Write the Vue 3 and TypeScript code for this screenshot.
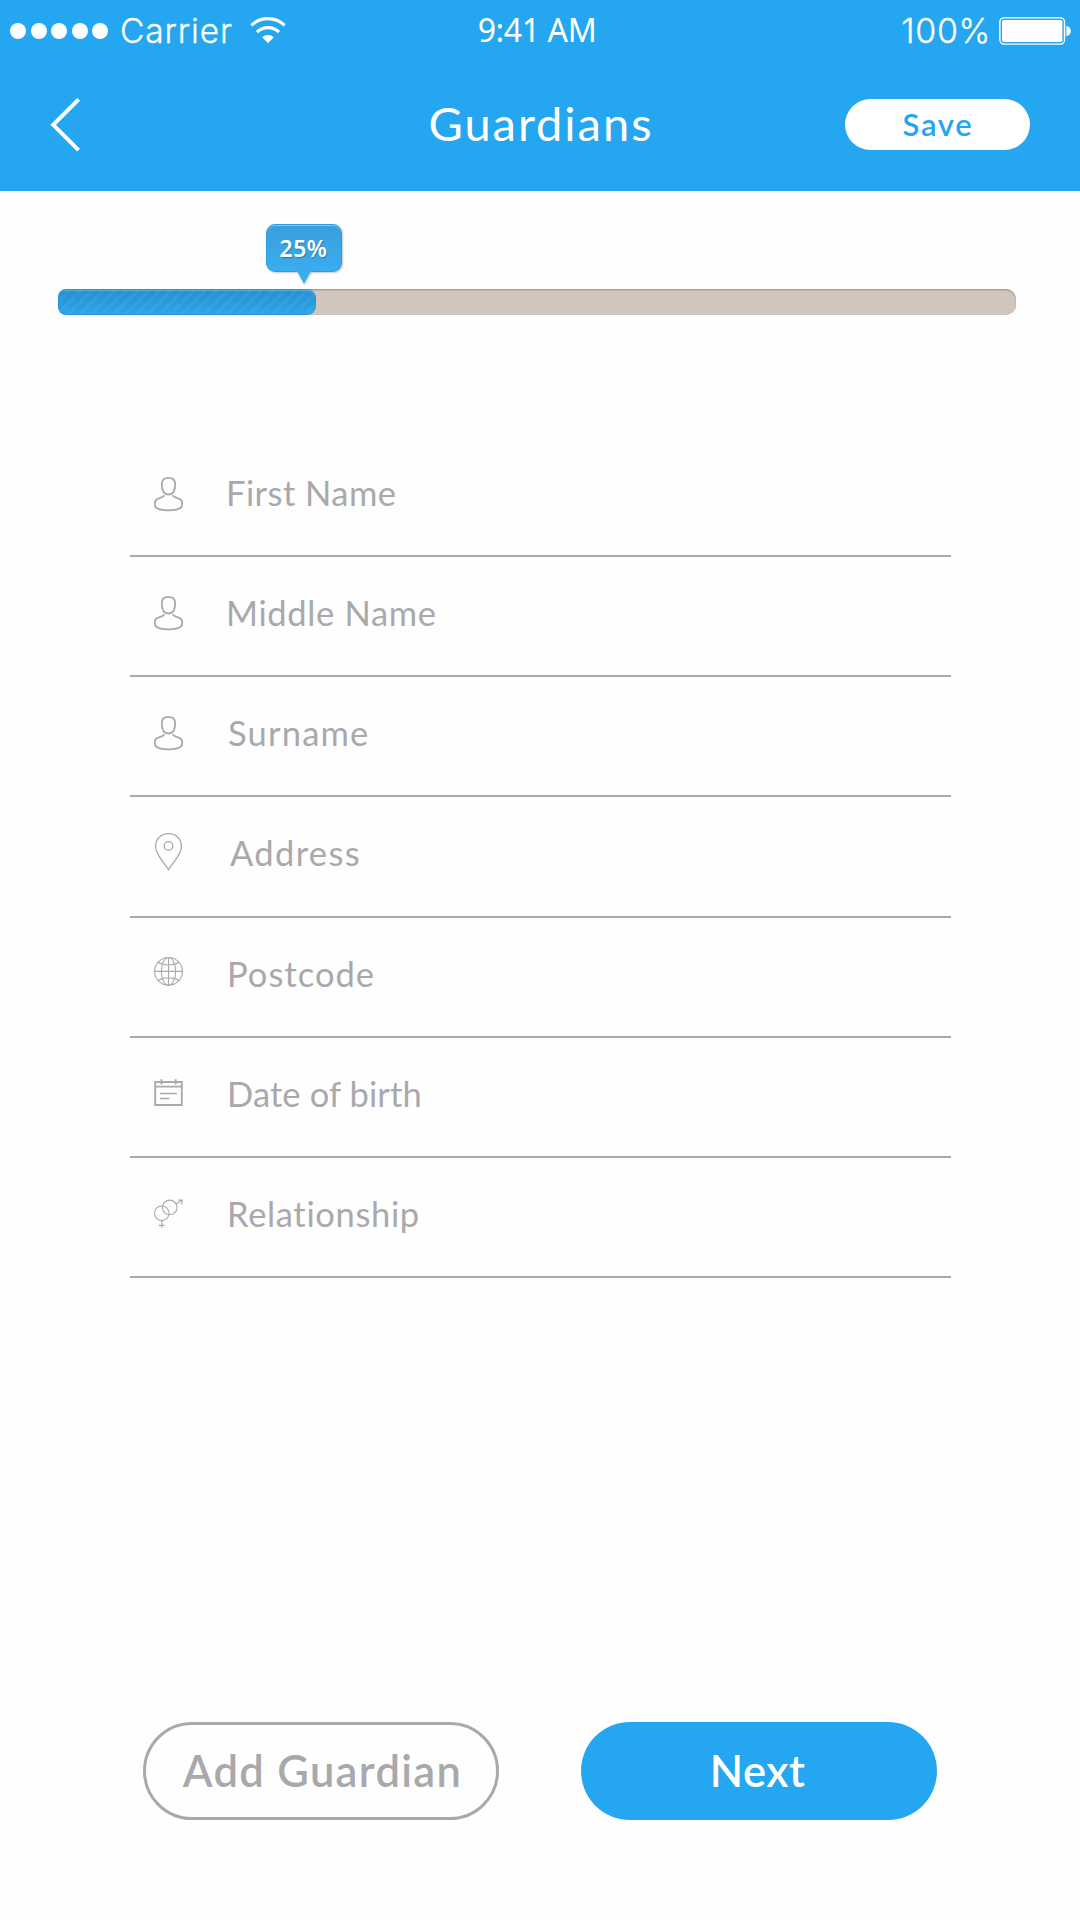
<script setup lang="ts">
import { reactive } from 'vue'

type IconName = 'person' | 'pin' | 'globe' | 'calendar' | 'gender'

interface Field {
  label: string
  icon: IconName
  indent: number
  tracking: number
}

const fields: Field[] = [
  { label: 'First Name', icon: 'person', indent: 41, tracking: 0.45 },
  { label: 'Middle Name', icon: 'person', indent: 41, tracking: 0.65 },
  { label: 'Surname', icon: 'person', indent: 43, tracking: 1.18 },
  { label: 'Address', icon: 'pin', indent: 45, tracking: 1.35 },
  { label: 'Postcode', icon: 'globe', indent: 42, tracking: 1.03 },
  { label: 'Date of birth', icon: 'calendar', indent: 42, tracking: 0.12 },
  { label: 'Relationship', icon: 'gender', indent: 42, tracking: 0.65 },
]

const progress = reactive({ label: '25%', fill: 26.93 })
</script>

<template>
  <div class="screen">
    <header class="header">
      <div class="status">
        <div class="status-left">
          <span class="dots"><i v-for="n in 5" :key="n" class="dot"></i></span>
          <span class="carrier">Carrier</span>
          <svg class="wifi" width="36" height="28" viewBox="0 0 36 28" fill="none" stroke="#fff" stroke-width="3.2">
            <path d="M1.4 9.4C10.6 0.3 25.4 0.3 34.6 9.4" />
            <path d="M7 16.2C13.2 10.2 22.8 10.2 29 16.2" />
            <path d="M12.2 21.2C15.6 18.2 20.4 18.2 23.8 21.2L18 27.2Z" fill="#fff" stroke="none" />
          </svg>
        </div>
        <div class="time">9:41 AM</div>
        <div class="status-right">
          <span class="percent">100%</span>
          <svg class="battery" width="73" height="28" viewBox="0 0 73 28">
            <rect x="0.9" y="0.9" width="64.6" height="26.2" rx="4" fill="none" stroke="#fff" stroke-width="1.4" />
            <rect x="3" y="3" width="60.4" height="22" rx="1.8" fill="#fff" />
            <path d="M67.3 9C73.4 9.6 73.4 18.4 67.3 19Z" fill="#fff" />
          </svg>
        </div>
      </div>
      <nav class="nav">
        <div class="nav-left">
          <svg class="back" width="31" height="54" viewBox="0 0 31 54" fill="none" stroke="#fff" stroke-width="4">
            <path d="M28.6 1.4L3.2 26.8L28.6 52.2" />
          </svg>
        </div>
        <h1 class="title">Guardians</h1>
        <div class="nav-right"><button class="save">Save</button></div>
      </nav>
    </header>

    <section class="progress">
      <div class="bubble"><span>{{ progress.label }}</span></div>
      <div class="track">
        <div class="fill" :style="{ width: progress.fill + '%' }"></div>
      </div>
    </section>

    <form class="form">
      <label v-for="f in fields" :key="f.label" class="row">
        <svg class="icon" width="32" height="44" viewBox="0 0 32 44" fill="none" stroke="#a9a9ab">
          <g v-if="f.icon === 'person'" stroke-width="1.8" stroke-linecap="round">
            <path d="M15.5 6.8C19.8 6.8 22.2 9 22.2 13.3C22.2 19.6 20.2 23.5 15.5 23.5C10.8 23.5 8.8 19.6 8.8 13.3C8.8 9 11.2 6.8 15.5 6.8Z" />
            <path d="M11 24.8C8.6 27.2 5.2 27 3 29C1.7 30.3 1.7 33.4 2.2 35.6C4.2 38.2 10 39.3 15.5 39.3C21 39.3 26.8 38.2 28.8 35.6C29.3 33.4 29.3 30.3 28 29C25.8 27 22.4 27.2 20 24.8" />
          </g>
          <g v-else-if="f.icon === 'pin'" stroke-width="1.3">
            <path d="M15.5 38.8C11.5 31.5 2.6 24 2.6 15.4C2.6 8 8 2.7 15.5 2.7C23 2.7 28.4 8 28.4 15.4C28.4 24 19.5 31.5 15.5 38.8Z" />
            <circle cx="15.5" cy="15" r="4.3" />
          </g>
          <g v-else-if="f.icon === 'globe'" stroke-width="1.1">
            <circle cx="15.5" cy="19.4" r="13.9" />
            <ellipse cx="15.5" cy="19.4" rx="7.1" ry="13.9" />
            <path d="M15.5 5.5V33.3M1.6 19.4H29.4M4.9 10.3C10.5 13.9 20.5 13.9 26.1 10.3M4.9 28.5C10.5 24.9 20.5 24.9 26.1 28.5" />
          </g>
          <g v-else-if="f.icon === 'calendar'" stroke-width="1.9">
            <path d="M2.2 10H28.8V33H2.2ZM2.2 14.6H28.8" />
            <path d="M8.5 7.2V12.6M22.7 7.2V12.6" />
            <path d="M7.6 21.5H23.2M7.6 26.5H15.6" stroke-width="1.7" stroke-linecap="round" />
          </g>
          <g v-else stroke-width="1.1">
            <circle cx="8.8" cy="21.3" r="7.3" />
            <circle cx="16.7" cy="15.4" r="7.3" />
            <path d="M23 12L28.6 8.6M25.3 8.1L29.2 8.1L28.6 12.4M8.8 28.6V36M5.9 33.4H11.7" />
          </g>
        </svg>
        <span class="label" :style="{ marginLeft: f.indent + 'px', letterSpacing: f.tracking + 'px' }">{{ f.label }}</span>
      </label>
    </form>

    <footer class="actions">
      <button class="btn btn-outline">Add Guardian</button>
      <button class="btn btn-primary">Next</button>
    </footer>
  </div>
</template>

<style>
body {
  background: #fefefe;
}
</style>

<style scoped>
* {
  box-sizing: border-box;
}
.screen {
  display: flex;
  flex-direction: column;
  width: 1080px;
  height: 1920px;
  background: #fefefe;
  font-family: Lato, sans-serif;
}
button {
  border: none;
  margin: 0;
  font-family: inherit;
}
.header {
  height: 191px;
  background: #24a6f1;
  color: #fff;
}
.status {
  display: grid;
  grid-template-columns: 1fr auto 1fr;
  align-items: center;
  height: 58px;
  padding: 2px 8px 0 10px;
}
.status-left,
.status-right {
  display: flex;
  align-items: center;
  height: 58px;
}
.status-right {
  justify-content: flex-end;
}
.dots {
  display: flex;
  gap: 4.5px;
}
.dot {
  width: 16px;
  height: 16px;
  border-radius: 50%;
  background: #fff;
}
.carrier {
  margin-left: 12px;
  font: 300 33.5px/56px Inter, sans-serif;
  letter-spacing: 0.87px;
  -webkit-text-stroke: 0.3px #fff;
}
.wifi {
  margin-left: 17px;
  margin-bottom: 3px;
}
.time {
  margin-left: -8px;
  padding-bottom: 2px;
  font: 400 32px/56px "Noto Sans", sans-serif;
  letter-spacing: -0.38px;
}
.percent {
  font: 300 34px/56px Inter, sans-serif;
  letter-spacing: 0.6px;
  -webkit-text-stroke: 0.3px #fff;
}
.battery {
  margin-left: 8px;
}
.nav {
  display: grid;
  grid-template-columns: 1fr auto 1fr;
  align-items: center;
  height: 133px;
  padding: 0 50px 0 50px;
}
.nav-left {
  display: flex;
}
.title {
  margin: 0 -2px 0 0;
  padding-bottom: 4px;
  font-size: 47px;
  font-weight: 400;
  line-height: 60px;
  letter-spacing: 1.97px;
}
.nav-right {
  display: flex;
  justify-content: flex-end;
}
.save {
  width: 185px;
  height: 51px;
  padding: 0 0 1px 1px;
  border-radius: 25.5px;
  background: #fff;
  color: #24a6f1;
  font-size: 31px;
  font-weight: 600;
  line-height: 50px;
  letter-spacing: 1.7px;
}
.progress {
  height: 246px;
  padding: 33px 64px 0 58px;
}
.bubble {
  position: relative;
  width: 76px;
  height: 48px;
  margin-left: 208px;
  padding-right: 1px;
  border: 1px solid #2c9ce0;
  border-radius: 9px;
  background: linear-gradient(#3a9fdb, #39adf0);
  box-shadow: inset 0 1px 0 #7fc6f0, 1px 1px 2px rgba(0, 0, 0, 0.22);
  color: #fff;
  font: 600 23px/47px "Noto Sans", sans-serif;
  letter-spacing: 0.5px;
  text-align: center;
  text-shadow: 1px 1px 1px rgba(0, 40, 80, 0.35);
}
.bubble::after {
  content: "";
  position: absolute;
  left: 30px;
  top: 46px;
  border: 7px solid transparent;
  border-top: 13px solid #39adf0;
  border-bottom: none;
  filter: drop-shadow(1px 1px 1px rgba(0, 0, 0, 0.18));
}
.track {
  height: 26px;
  margin-top: 17px;
  border-radius: 10px;
  background: #d1c6bd;
  box-shadow: inset 0 1px 2px rgba(80, 65, 55, 0.42);
}
.fill {
  height: 26px;
  border-radius: 8px 9px 9px 8px;
  background:
    repeating-linear-gradient(135deg, rgba(255, 255, 255, 0.05) 0 2.5px, transparent 3.5px 7px, rgba(255, 255, 255, 0.05) 8px),
    linear-gradient(#268fcd, #2ca4ec);
  box-shadow: inset 0 0 0 1px #2295da, inset 0 2px 0 #4eaee5;
}
.form {
  width: 821px;
  margin-left: 130px;
}
.row {
  display: flex;
  height: 120px;
  padding-left: 23px;
  border-bottom: 2px solid #a9a9ab;
}
.row:nth-child(4) {
  height: 121px;
}
.icon {
  margin-top: 34px;
}
.row:nth-child(2) .icon,
.row:nth-child(3) .icon {
  margin-top: 33px;
}
.label {
  color: #a9a9ab;
  font-size: 34.5px;
  line-height: 112px;
}
.actions {
  display: flex;
  justify-content: space-between;
  width: 794px;
  margin: auto 0 100px 143px;
}
.btn {
  width: 356px;
  height: 98px;
  border-radius: 49px;
  font-size: 43.5px;
  font-weight: 600;
}
.btn-outline {
  padding: 0 0 3px 3px;
  border: 3px solid #a9a9ab;
  background: transparent;
  color: #a9a9ab;
  letter-spacing: 1.3px;
}
.btn-primary {
  padding: 0 3px 3px 0;
  background: #24a6f1;
  color: #fff;
  letter-spacing: 0.5px;
}
</style>
